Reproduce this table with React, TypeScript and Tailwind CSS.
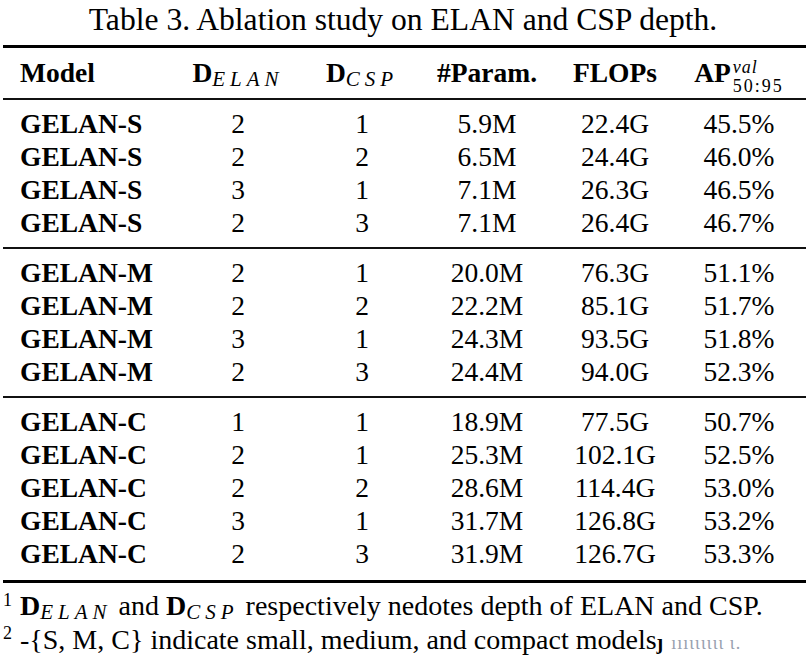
const ROWS = [
  [
    ['GELAN-S', '2', '1', '5.9M', '22.4G', '45.5%'],
    ['GELAN-S', '2', '2', '6.5M', '24.4G', '46.0%'],
    ['GELAN-S', '3', '1', '7.1M', '26.3G', '46.5%'],
    ['GELAN-S', '2', '3', '7.1M', '26.4G', '46.7%'],
  ],
  [
    ['GELAN-M', '2', '1', '20.0M', '76.3G', '51.1%'],
    ['GELAN-M', '2', '2', '22.2M', '85.1G', '51.7%'],
    ['GELAN-M', '3', '1', '24.3M', '93.5G', '51.8%'],
    ['GELAN-M', '2', '3', '24.4M', '94.0G', '52.3%'],
  ],
  [
    ['GELAN-C', '1', '1', '18.9M', '77.5G', '50.7%'],
    ['GELAN-C', '2', '1', '25.3M', '102.1G', '52.5%'],
    ['GELAN-C', '2', '2', '28.6M', '114.4G', '53.0%'],
    ['GELAN-C', '3', '1', '31.7M', '126.8G', '53.2%'],
    ['GELAN-C', '2', '3', '31.9M', '126.7G', '53.3%'],
  ],
]

const GRID = 'grid grid-cols-[158px_120px_128px_122px_134px_114px] pl-[20px]'

function Sub({ children }: { children: string }) {
  return (
    <span className="align-[-4px] text-[21px] leading-none font-normal italic tracking-[5px]">
      {children}
    </span>
  )
}

function Rule({ thick }: { thick?: boolean }) {
  return <div className={thick ? 'ml-[3px] h-[3px] bg-black' : 'ml-[3px] h-[2px] bg-[#111]'} />
}

export default function App() {
  return (
    <div className="h-[661px] w-[806px] overflow-hidden bg-white font-['Liberation_Serif',serif] text-black">
      <div className="h-[45px] text-center text-[31.6px] leading-[40px]">
        Table 3. Ablation study on ELAN and CSP depth.
      </div>
      <Rule thick />

      <div className={`${GRID} h-[50px] text-[27.5px] leading-[50px] font-bold`}>
        <div>Model</div>
        <div className="text-center">
          D<Sub>ELAN</Sub>
        </div>
        <div className="text-center">
          D<Sub>CSP</Sub>
        </div>
        <div className="text-center">#Param.</div>
        <div className="text-center">FLOPs</div>
        <div className="text-center">
          AP
          <span className="ml-[2px] inline-flex flex-col align-[9px] text-left text-[18px] leading-[19px] font-normal">
            <span className="italic tracking-[1px]">val</span>
            <span className="tracking-[2px]">50:95</span>
          </span>
        </div>
      </div>
      <Rule />

      {ROWS.map((group, gi) => (
        <div key={gi}>
          <div className={gi === 2 ? 'pt-[7px] pb-[10px]' : 'pt-[7px] pb-[8px]'}>
            {group.map((row, ri) => (
              <div key={ri} className={`${GRID} text-[27.5px] leading-[33px]`}>
                <div className="font-bold">{row[0]}</div>
                {row.slice(1).map((cell, ci) => (
                  <div key={ci} className="text-center">
                    {cell}
                  </div>
                ))}
              </div>
            ))}
          </div>
          <Rule thick={gi === 2} />
        </div>
      ))}

      <div className="mt-[6px] pl-[3px] text-[28px] leading-[33px]">
        <div className="whitespace-nowrap">
          <span className="inline-block w-[17px] align-[9px] text-[18px] leading-none">1</span>
          <span className="font-bold">D</span>
          <Sub>ELAN</Sub> and <span className="font-bold">D</span>
          <Sub>CSP</Sub> respectively nedotes depth of ELAN and CSP.
        </div>
        <div className="whitespace-nowrap">
          <span className="inline-block w-[17px] align-[10px] text-[18px] leading-none">2</span>
          -{'{'}S, M, C{'}'} indicate small, medium, and compact models
          <span className="text-[20px] font-bold">ȷ</span>
          <span className="ml-[8px] text-[18px] tracking-[1px] text-gray-400">ıııɩɩɩɩɩɩ ɩ.</span>
        </div>
      </div>
    </div>
  )
}
